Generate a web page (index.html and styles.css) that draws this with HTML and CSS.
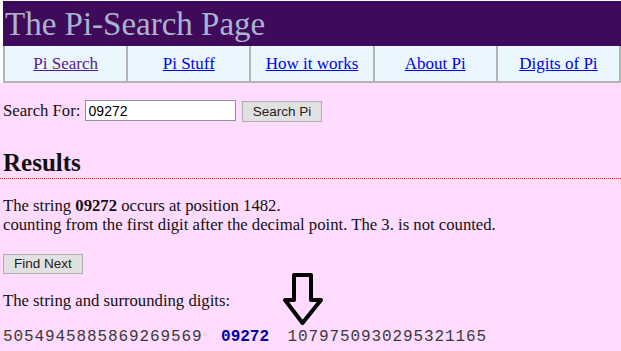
FILE: index.html
```html
<!DOCTYPE html>
<html lang="en">
<head>
<meta charset="UTF-8">
<title>The Pi-Search Page</title>
<link rel="stylesheet" href="styles.css">
</head>
<body>

<div class="top">
<div class="header">The Pi-Search Page</div>
<table class="nav">
<tr>
<td><a class="visited" href="#">Pi Search</a></td>
<td><a href="#">Pi Stuff</a></td>
<td><a href="#">How it works</a></td>
<td><a href="#">About Pi</a></td>
<td><a href="#">Digits of Pi</a></td>
</tr>
</table>
</div>

<div class="content">
<form class="search">
Search For: <input type="text" value="09272"> <button type="button" class="btn">Search Pi</button>
</form>

<h2>Results</h2>

<p class="found">The string <b>09272</b> occurs at position 1482.<br>
counting from the first digit after the decimal point. The 3. is not counted.</p>

<button type="button" class="btn btn-next">Find Next</button>

<p class="around">The string and surrounding digits:</p>

<div class="digits">5054945885869269569 <b>09272</b> 1079750930295321165</div>

<!-- arrow over the match -->
<svg class="arrow" width="44" height="58" viewBox="0 0 44 58">
<path d="M12 3 H29 V28 H39 L20.5 51 L3 28 H12 Z" fill="none" stroke="#000" stroke-width="4" stroke-linejoin="round"/>
</svg>
</div>

</body>
</html>
```

FILE: styles.css
```css
body {
margin: 0;
background-color: #ffdcff;
font-family: "Liberation Serif", "Times New Roman", serif;
font-size: 16.7px;
color: #111;
}

.top {
background-color: #ffffff;
padding: 1px 0 0 3px;
}

.header {
background-color: #3f0a5a;
color: #a9b5cf;
font-size: 33px;
height: 45px;
line-height: 46px;
padding-left: 2px;
}

.nav {
width: 100%;
border-collapse: collapse;
background-color: #ebf7ff;
}

.nav td {
border: 2px solid #b4b4b4;
border-top: none;
width: 20%;
height: 35px;
text-align: center;
padding: 0;
font-size: 17px;
}

.nav a {
color: #0000ee;
}

.nav a.visited {
color: #551a8b;
}

.content {
position: relative;
padding: 0 3px;
}

.search {
margin: 17px 0 0;
}

.search input {
width: 143px;
height: 17px;
padding: 1px 3px;
border: 1px solid #8f8f9d;
font-family: "Liberation Sans", Arial, sans-serif;
font-size: 14px;
margin: 0 2px 0 0;
}

.btn {
font-family: "Liberation Sans", Tahoma, sans-serif;
font-size: 13.5px;
background-color: #e1e1e1;
border: 1px solid #adadad;
color: #222;
padding: 1px 10px;
height: 21px;
}

h2 {
font-size: 25px;
margin: 27px -3px 0;
padding: 0 0 1px 3px;
border-bottom: 1px dotted #ff3030;
}

.found {
margin: 17px 0 0;
line-height: 19px;
}

.btn-next {
margin-top: 20px;
height: 20px;
}

.around {
margin: 17px 0 0;
}

.digits {
font-family: "Liberation Mono", "Courier New", monospace;
font-size: 16px;
letter-spacing: 0.9px;
margin-top: 17px;
color: #3a3a3a;
}

.digits b {
color: #0000aa;
letter-spacing: 0;
margin: 0 8px;
}

.arrow {
position: absolute;
left: 282px;
top: 172px;
}
```
